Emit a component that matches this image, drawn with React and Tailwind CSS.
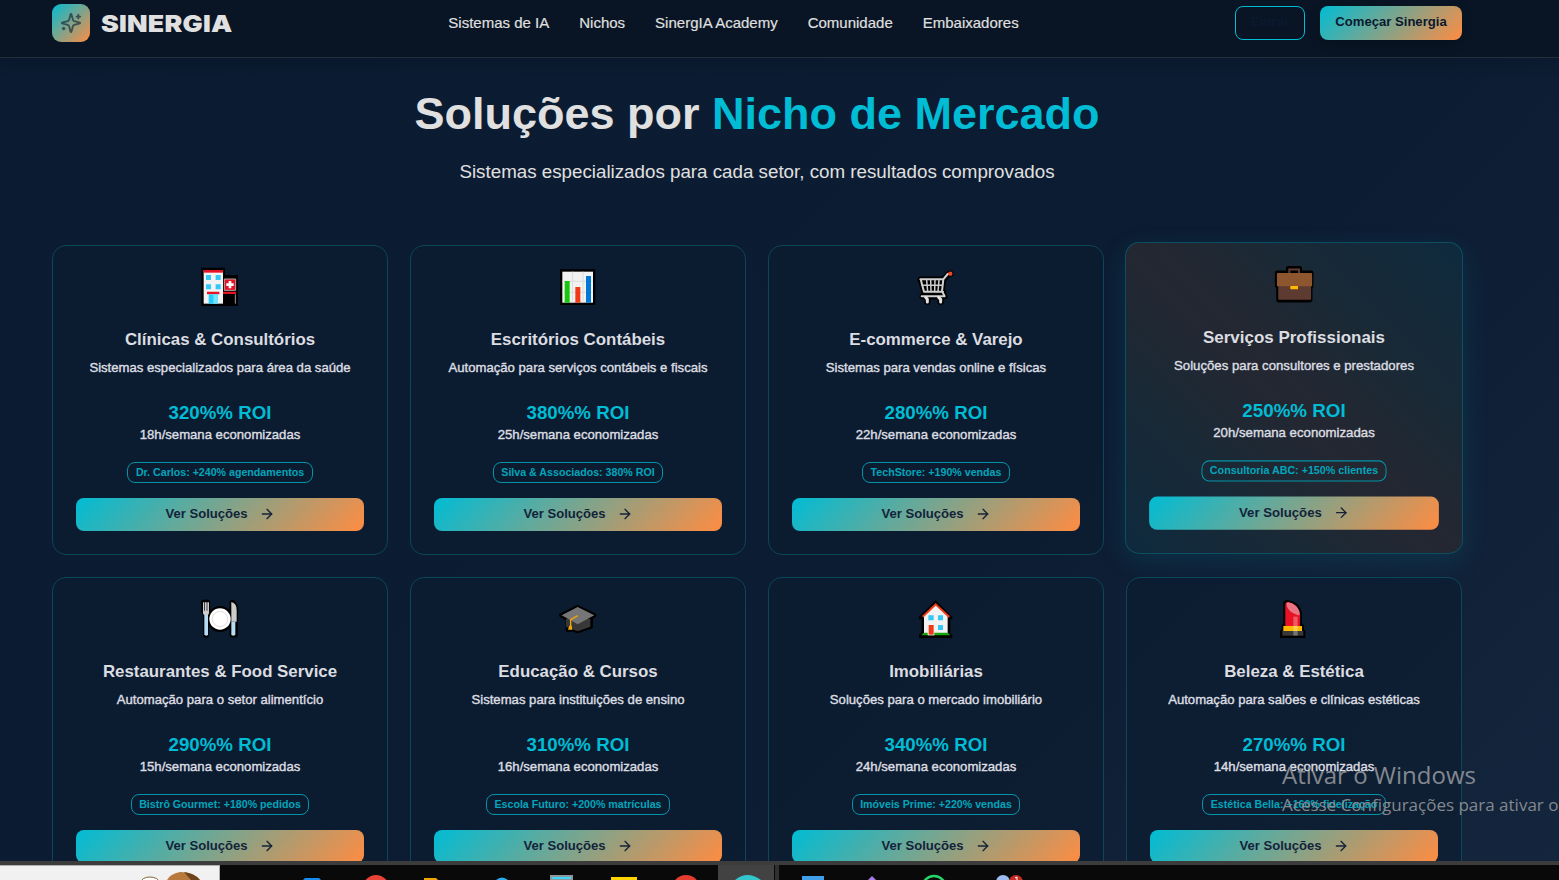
import React from "react";
import { ArrowRight } from "lucide-react";

const icons = {
  hospital: (
    <svg viewBox="474 90 132 132" className="size-11">
      <path d="M484 98h71v22h39v93H484z" fill="#000" />
      <path d="M491 105h58v101h-58z" fill="#f2f2f2" />
      <path d="M491 105h58v8h-58z" fill="#e81224" />
      <path d="M498 120h15v15h-15zM527 120h15v15h-15zM498 148h15v15h-15zM527 148h15v15h-15z" fill="#35c8f5" />
      <path d="M501 170h37v8h-37zM549 170h39v7h-39z" fill="#e81224" />
      <path d="M506 178h27v28h-27z" fill="#26cdfa" />
      <path d="M520 178h13v28h-13z" fill="#6fe6ff" />
      <path d="M553 132h34v34h-34z" fill="#e81224" stroke="#a9a9a9" strokeWidth="3" />
      <path d="M566 138h8v7h7v8h-7v7h-8v-7h-7v-8h7z" fill="#fff" />
      <path d="M586 178v28" stroke="#999" strokeWidth="3" />
    </svg>
  ),
  chart: (
    <svg viewBox="48 30 132 132" className="size-11">
      <path d="M60 43h106v107H60z" fill="#000" />
      <path d="M67 50h92v93H67z" fill="#f2f2f2" />
      <path d="M98 50v93M129 50v93M67 79h92M67 112h92" stroke="#dcdcdc" strokeWidth="3" />
      <path d="M74 78h15v65H74z" fill="#16c60c" />
      <path d="M106 96h15v47h-15z" fill="#f03a17" />
      <path d="M138 63h15v80h-15z" fill="#0078d7" />
    </svg>
  ),
  cart: (
    <svg viewBox="1122 30 132 132" className="size-11" fill="none" strokeLinejoin="round" strokeLinecap="round">
      <g stroke="#000" strokeWidth="19">
        <path d="M1142 74h68l14-15 7-3M1143 74l10 36h56M1209 74l-4 36 8 14h-65M1162 128v12M1202 128v12" />
        <path d="M1148 80h55v28h-50z" fill="#000" strokeWidth="3" />
      </g>
      <path d="M1141 73h69l13-16 6-1M1142 73l10 37h57M1210 73l-4 36 8 15h-69" stroke="#d0d0d0" strokeWidth="6" />
      <path d="M1146 91h60M1160 76l3 33M1172 76l1 33M1185 76l-1 33M1197 76l-3 33" stroke="#ccc" strokeWidth="4.5" />
      <path d="M1157 127l5 6v8M1196 127l6 6v8" stroke="#e4e4e4" strokeWidth="9" />
      <circle cx="1231" cy="56" r="6.5" fill="#f0452a" />
    </svg>
  ),
  briefcase: (
    <svg viewBox="486 99 132 132" className="size-11">
      <path d="M495 130q0-6 7-6h26v-7q0-7 8-7h32q8 0 8 7v7h27q7 0 7 7v40l-3 6v34q0 8-8 8h-92q-8 0-8-8v-34l-4-6z" fill="#000" />
      <path d="M535 132v-14h35v14h-6v-8h-23v8z" fill="#5e3b31" />
      <path d="M505 169h98v39q0 3-3 3h-92q-3 0-3-3z" fill="#5e3b31" />
      <path d="M501 134q0-3 3-3h99q3 0 3 3v37H501z" fill="#8e562e" />
      <path d="M541 170h23v10h-23z" fill="#ffb900" />
    </svg>
  ),
  plate: (
    <svg viewBox="54 21 132 132" className="size-11">
      <path d="M72 37v28l6 8v62M82 37v28l-4 8M157 38v96h8V75q5-30-8-37" fill="none" stroke="#000" strokeWidth="17" strokeLinejoin="round" strokeLinecap="round" />
      <circle cx="120" cy="87" r="39" fill="#000" />
      <path d="M69 37h4v25h2V37h5v25h2V37h5v31q0 5-4 7H73q-4-2-4-7z" fill="#ccc" />
      <path d="M73 75h11v58q0 4-5 4t-6-4z" fill="#b5dcf4" />
      <path d="M154 36q16 3 16 25v34h-16z" fill="#ccc" />
      <path d="M154 95h12v38q0 4-6 4t-6-4z" fill="#b5dcf4" />
      <circle cx="120" cy="87" r="32" fill="#fff" />
      <circle cx="120" cy="87" r="23" fill="none" stroke="#e0e0e0" strokeWidth="3" />
    </svg>
  ),
  cap: (
    <svg viewBox="1128 21 132 132" className="size-11">
      <path d="M1193 51l50 25-10 7v27l-40 14-22-8v4h-8v-32l-20-12z" fill="#000" stroke="#000" strokeWidth="12" strokeLinejoin="round" />
      <path d="M1158 88l35-15 38 15v22l-38 14-35-14z" fill="#383838" />
      <path d="M1193 51l50 25-50 27-48-27z" fill="#767676" />
      <path d="M1193 77l-21 12v22" fill="none" stroke="#f7a800" strokeWidth="4" />
      <path d="M1168 107h7l2 12h-13z" fill="#f7a800" />
    </svg>
  ),
  house: (
    <svg viewBox="42 21 132 132" className="size-11">
      <path d="M107 31l50 49v8h-6v40l6 8v8H57v-9l8-10V88h-8v-8z" fill="#000" />
      <path d="M72 77l35-34 36 34v57H72z" fill="#f2f2f2" />
      <path d="M68 80l39-37 41 38" fill="none" stroke="#f03a17" strokeWidth="6" />
      <path d="M85 76h16v15H85zM114 76h15v15h-15zM114 105h15v15h-15z" fill="#35c8f5" />
      <path d="M65 136q2-8 9-8h67q7 0 9 8z" fill="#16a60c" />
      <path d="M83 105h20v31H83z" fill="#f2f2f2" />
      <path d="M86 105h15v29H86z" fill="#f03a17" />
    </svg>
  ),
  lipstick: (
    <svg viewBox="1116 21 132 132" className="size-11">
      <path d="M1150 101V42q0-12 12-12 36 4 44 38v33q6 1 6 10v9h4v24h-76v-24h5v-9q0-9 5-10z" fill="#000" />
      <path d="M1156 108V44q0-8 8-8 28 4 36 36v36z" fill="#e81224" />
      <path d="M1159 43q0-6 6-6 13 2 23 11 12 13 11 24-1 5-7 3-29-9-33-32" fill="#e87484" />
      <path d="M1150 108h56v15h-56z" fill="#ffb900" />
      <path d="M1147 123h63v14h-63z" fill="#383838" />
      <path d="M1180 80h13v57h-13z" fill="#fff" opacity=".3" />
    </svg>
  ),
};

const niches = [
  { icon: "hospital", title: "Clínicas & Consultórios", text: "Sistemas especializados para área da saúde", roi: "320%% ROI", hours: "18h/semana economizadas", badge: "Dr. Carlos: +240% agendamentos" },
  { icon: "chart", title: "Escritórios Contábeis", text: "Automação para serviços contábeis e fiscais", roi: "380%% ROI", hours: "25h/semana economizadas", badge: "Silva & Associados: 380% ROI" },
  { icon: "cart", title: "E-commerce & Varejo", text: "Sistemas para vendas online e físicas", roi: "280%% ROI", hours: "22h/semana economizadas", badge: "TechStore: +190% vendas" },
  { icon: "briefcase", title: "Serviços Profissionais", text: "Soluções para consultores e prestadores", roi: "250%% ROI", hours: "20h/semana economizadas", badge: "Consultoria ABC: +150% clientes", active: true },
  { icon: "plate", title: "Restaurantes & Food Service", text: "Automação para o setor alimentício", roi: "290%% ROI", hours: "15h/semana economizadas", badge: "Bistrô Gourmet: +180% pedidos" },
  { icon: "cap", title: "Educação & Cursos", text: "Sistemas para instituições de ensino", roi: "310%% ROI", hours: "16h/semana economizadas", badge: "Escola Futuro: +200% matrículas" },
  { icon: "house", title: "Imobiliárias", text: "Soluções para o mercado imobiliário", roi: "340%% ROI", hours: "24h/semana economizadas", badge: "Imóveis Prime: +220% vendas" },
  { icon: "lipstick", title: "Beleza & Estética", text: "Automação para salões e clínicas estéticas", roi: "270%% ROI", hours: "14h/semana economizadas", badge: "Estética Bella: +160% fidelização" },
];

const navItems = ["Sistemas de IA", "Nichos", "SinergIA Academy", "Comunidade", "Embaixadores"];

function Header() {
  return (
    <header className="flex h-[58px] shrink-0 items-start justify-between border-b border-[#252f3c] bg-[#091524] pt-1 pr-[97px] pl-[52px] shadow-[0_4px_14px_rgba(5,15,25,0.3)]">
      <div className="flex h-[38px] items-start gap-[11px]">
        <div className="flex size-[38px] items-center justify-center rounded-[9px] bg-[linear-gradient(135deg,#00bcd4,#ff8c42)]">
          <svg viewBox="0 0 24 24" className="size-[22px] opacity-60" fill="none" stroke="#0a192f" strokeWidth="2" strokeLinecap="round" strokeLinejoin="round">
            <path d="M9.937 15.5A2 2 0 0 0 8.5 14.063l-6.135-1.582a.5.5 0 0 1 0-.962L8.5 9.936A2 2 0 0 0 9.937 8.5l1.582-6.135a.5.5 0 0 1 .963 0L14.063 8.5A2 2 0 0 0 15.5 9.937l6.135 1.581a.5.5 0 0 1 0 .964L15.5 14.063a2 2 0 0 0-1.437 1.437l-1.582 6.135a.5.5 0 0 1-.963 0z" />
            <path d="M20 3v4M22 5h-4M4 17v2M5 18H3" />
          </svg>
        </div>
        <span className="w-[131px] font-['Inter'] text-[23.5px] leading-[38px] font-black text-[#e0e0e0]">
          <span className="inline-block origin-left scale-x-[1.138] pt-px tracking-[0.2px]">SINERGIA</span>
        </span>
      </div>
      <nav className="flex gap-[30px] text-[15px] leading-[38px] text-[#e0e0e0] [-webkit-text-stroke:0.15px_currentColor]">
        {navItems.map((item) => (
          <a key={item}>{item}</a>
        ))}
      </nav>
      <div className="mt-0.5 flex gap-[15px] text-[13.1px] font-bold">
        <button className="h-[34px] w-[70px] rounded-lg border border-[#00bcd4] pb-0.5 text-[#0a192f]">Entrar</button>
        <button className="h-[34px] w-[142px] rounded-lg bg-[linear-gradient(135deg,#00bcd4,#ff8c42)] pb-[3px] text-[#0a192f] shadow-[0_4px_12px_rgba(0,0,0,0.2)]">Começar Sinergia</button>
      </div>
    </header>
  );
}

function NicheCard({ niche }) {
  const look = niche.active
    ? "-translate-y-[2px] scale-[1.006] border-[#0d4f60] bg-[linear-gradient(45deg,#0e2a3e_0%,#1b2935_30%,#242731_50%,#1b2935_68%,#0e2a3e_100%)] shadow-[0_7px_26px_rgba(0,188,212,0.13)]"
    : "border-[#0a4758] bg-[#0c1c31]/60";
  return (
    <article className={`flex h-[310px] flex-col items-center rounded-[14px] border px-[23px] pt-[19px] text-[#dcdde0] ${look}`}>
      {icons[niche.icon]}
      <h3 className="mt-[20px] text-[16.87px] leading-[22px] font-bold">{niche.title}</h3>
      <p className="mt-[7px] text-[13.14px] leading-5 [-webkit-text-stroke:0.4px_currentColor]">{niche.text}</p>
      <p className="mt-[23px] text-[18.7px] leading-6 font-bold text-[#00bcd4]">{niche.roi}</p>
      <p className="text-[13.14px] leading-5 [-webkit-text-stroke:0.4px_currentColor]">{niche.hours}</p>
      <span className="mt-[17px] h-[21px] rounded-[8px] border border-[#0593a8] px-[7.5px] text-[10.65px] leading-[19px] font-bold text-[#03a5bb]">{niche.badge}</span>
      <button className="mt-[15px] flex h-[33px] w-full items-center justify-center gap-[11px] rounded-lg bg-[linear-gradient(135deg,#00bcd4,#ff8c42)] text-[13.1px] font-bold text-[#14233a]">
        <span className="pb-px">Ver Soluções</span>
        <ArrowRight className="mb-px size-4" />
      </button>
    </article>
  );
}

function Taskbar() {
  return (
    <footer className="flex h-[19px] shrink-0 flex-col">
      <div className="h-1 bg-[#3c3c3c]" />
      <div className="flex h-[15px] bg-[#090909]">
        <div className="w-[220px] border-t border-r border-[#b0b0b0] bg-[#f1f1f1]">
          <svg viewBox="0 866 219 14" className="block h-[14px] w-[219px]">
            <ellipse cx="150" cy="882" rx="9" ry="5" fill="#fff" stroke="#806638" />
            <path d="M167 880q3-6 13-8 14 0 20 8z" fill="#b77a3c" />
            <path d="M184 872q10 1 16 8h-9z" fill="#6d431d" />
          </svg>
        </div>
        <svg viewBox="220 865 1339 15" className="block h-[15px] w-[1339px]">
          <path d="M718 865h56v15h-56z" fill="#424242" />
          <path d="M775 865h4v15h-4z" fill="#303030" />
          <path d="M303 880l2-2h14l2 2z" fill="#168cf0" />
          <circle cx="376" cy="888" r="13" fill="#ea4335" />
          <path d="M424 878h12l2 2h-14z" fill="#f0a500" />
          <path d="M496 880q6-5 12 0z" fill="#28aef0" />
          <path d="M551 876h21v4h-21z" fill="#40d6f5" stroke="#8c969c" strokeWidth="2" />
          <path d="M611 877h26v3h-26z" fill="#ffd500" />
          <circle cx="686" cy="889" r="14" fill="#e63c30" />
          <path d="M735 880q12-10 26 0z" fill="#34c6cf" />
          <path d="M802 876h22v4h-22z" fill="#3f9fe8" />
          <path d="M868 880l4-4 4 4z" fill="#a57be8" />
          <circle cx="934" cy="888" r="12" fill="none" stroke="#25d366" strokeWidth="2.5" />
          <circle cx="1003" cy="882" r="7" fill="#9dbcf0" />
          <circle cx="1016" cy="882" r="7" fill="#c62a24" />
          <path d="M1015 878l2-1v3" stroke="#fff" fill="none" />
        </svg>
      </div>
    </footer>
  );
}

export default function App() {
  return (
    <div className="relative flex h-[880px] w-[1559px] flex-col overflow-hidden bg-[linear-gradient(135deg,#0b1b31_0%,#0c1c32_62%,#14263d_100%)] font-['Liberation_Sans',Arial,sans-serif]">
      <Header />
      <main className="flex h-[803px] shrink-0 flex-col overflow-hidden pr-[97px] pl-[52px]">
        <h1 className="mt-[29px] text-center text-[45px] leading-[54px] font-bold text-[#e0e0e0]">
          Soluções por <span className="text-[#00bcd4]">Nicho de Mercado</span>
        </h1>
        <p className="mt-[17px] text-center text-[18.75px] leading-7 text-[#e0e0e0]">
          Sistemas especializados para cada setor, com resultados comprovados
        </p>
        <section className="mt-[59px] grid grid-cols-4 gap-[22px]">
          {niches.map((niche) => (
            <NicheCard key={niche.title} niche={niche} />
          ))}
        </section>
      </main>
      <Taskbar />
      <aside className="pointer-events-none absolute top-[759px] left-[1282px] font-['Open_Sans','Noto_Sans',sans-serif] whitespace-nowrap text-[#84888f]">
        <p className="text-[24px] leading-[32px]">Ativar o Windows</p>
        <p className="text-[17px] leading-[28px]">Acesse Configurações para ativar o</p>
      </aside>
    </div>
  );
}
